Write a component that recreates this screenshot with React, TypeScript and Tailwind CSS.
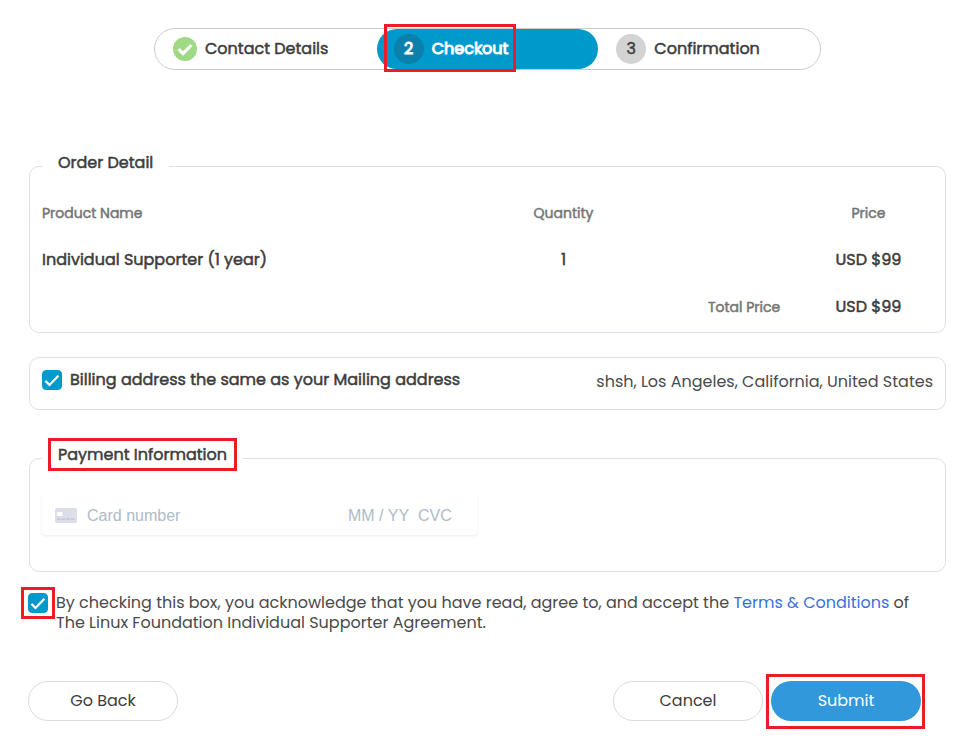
import { useState, type ReactNode } from "react";

function Mark({ className }: { className: string }) {
  return (
    <span
      aria-hidden="true"
      className={`pointer-events-none absolute border-3 border-[#ed1c24] ${className}`}
    />
  );
}

function Checkbox({
  id,
  checked,
  onChange,
}: {
  id: string;
  checked: boolean;
  onChange: (value: boolean) => void;
}) {
  return (
    <span className="relative block size-5 shrink-0">
      <input
        id={id}
        type="checkbox"
        checked={checked}
        onChange={(e) => onChange(e.target.checked)}
        className="block size-5 appearance-none rounded border border-[#0099cc] bg-white checked:bg-[#0099cc]"
      />
      {checked && (
        <svg
          viewBox="0 0 20 20"
          className="pointer-events-none absolute inset-0 size-5"
          fill="none"
          stroke="white"
          strokeWidth="2.2"
        >
          <path d="M3.4 10.9l4.1 4.1L16.4 5.8" />
        </svg>
      )}
    </span>
  );
}

function Panel({
  title,
  marked,
  children,
}: {
  title: string;
  marked?: boolean;
  children: ReactNode;
}) {
  return (
    <fieldset className="min-w-0 rounded-[10px] border border-[#dbe0e9] px-3">
      <legend className="relative px-4 pt-px pb-[7px] text-base leading-6 [-webkit-text-stroke:0.5px]">
        {title}
        {marked && <Mark className="inset-x-[6px] -top-1 bottom-[3px]" />}
      </legend>
      {children}
    </fieldset>
  );
}

function Stepper() {
  return (
    <ol className="mx-auto grid h-[42px] w-full max-w-[667px] grid-cols-3 rounded-full border border-[#cccccc] text-base [-webkit-text-stroke:0.5px]">
      <li className="flex items-center gap-2 pl-[18px]">
        <svg viewBox="0 0 24 24" className="size-6" fill="none">
          <circle cx="12" cy="12" r="12" fill="#9fd983" />
          <path d="M5.6 12.2l4.4 4.4 8.4-8.4" stroke="white" strokeWidth="3.2" />
        </svg>
        Contact Details
      </li>
      <li className="flex items-center rounded-full bg-[#0099cc] pl-[17px] text-white [-webkit-text-stroke:1px]">
        <span className="relative flex items-center gap-2">
          <span className="flex size-[30px] items-center justify-center rounded-full bg-[#0a80ab]">
            2
          </span>
          Checkout
          <Mark className="-top-[10px] -right-2 -bottom-2 -left-[10px]" />
        </span>
      </li>
      <li className="flex items-center gap-2 pl-[18px]">
        <span className="flex size-[30px] items-center justify-center rounded-full bg-[#d3d3d3]">
          3
        </span>
        Confirmation
      </li>
    </ol>
  );
}

const product = { name: "Individual Supporter (1 year)", quantity: 1, price: 99 };

function OrderTable() {
  const price = `USD $${product.price}`;
  return (
    <table className="mt-2 mb-[2px] w-full table-fixed text-center text-base [-webkit-text-stroke:0.5px]">
      <colgroup>
        <col />
        <col className="w-[241px]" />
        <col className="w-[120px]" />
        <col className="w-[129px]" />
      </colgroup>
      <thead>
        <tr className="h-[46px] text-sm text-[#757575]">
          <th scope="col" className="text-left font-normal">Product Name</th>
          <th scope="col" className="font-normal">Quantity</th>
          <td />
          <th scope="col" className="font-normal">Price</th>
        </tr>
      </thead>
      <tbody>
        <tr className="h-12">
          <td className="text-left">{product.name}</td>
          <td>{product.quantity}</td>
          <td />
          <td>{price}</td>
        </tr>
        <tr className="h-[46px]">
          <td colSpan={2} />
          <th scope="row" className="text-sm font-normal text-[#757575]">Total Price</th>
          <td>{price}</td>
        </tr>
      </tbody>
    </table>
  );
}

function CardField() {
  const input =
    "min-w-0 bg-transparent pt-[2px] text-base leading-5 text-[#32325d] outline-none placeholder:text-[#aebbc8] placeholder:opacity-100";
  return (
    <div className="mt-[21px] mb-9 flex h-10 max-w-[435px] items-center rounded bg-white pr-[17px] pl-[13px] font-['Liberation_Sans',Arial,sans-serif] shadow-[0_1px_3px_0_#e6ebf1]">
      <svg viewBox="0 0 22 15" className="mr-[10px] h-[15px] w-[22px] shrink-0">
        <rect width="22" height="15" rx="1.5" fill="#dcdfe7" />
        <rect x="2" y="4" width="5.5" height="4" rx="1" fill="white" />
        <path d="M2 11h18" stroke="#b3b8c8" strokeDasharray="3.6 1" />
      </svg>
      <input aria-label="Card number" placeholder="Card number" inputMode="numeric" className={`grow ${input}`} />
      <input aria-label="Expiry date" placeholder="MM / YY" inputMode="numeric" className={`w-[70px] ${input}`} />
      <input aria-label="CVC" placeholder="CVC" inputMode="numeric" className={`w-[42px] ${input}`} />
    </div>
  );
}

export default function App() {
  const [sameAddress, setSameAddress] = useState(true);
  const [accepted, setAccepted] = useState(true);

  return (
    <main className="bg-white pt-7 pr-6 pb-8 pl-[29px] font-[Poppins,Inter,sans-serif] text-[#3c3c3c]">
      <Stepper />

      <div className="mt-20">
        <Panel title="Order Detail">
          <OrderTable />
        </Panel>
      </div>

      <section className="mt-6 flex min-h-[53px] items-start gap-2 rounded-[10px] border border-[#dbe0e9] p-3">
        <Checkbox id="same-address" checked={sameAddress} onChange={setSameAddress} />
        <label htmlFor="same-address" className="grow text-base leading-5 [-webkit-text-stroke:0.5px]">
          Billing address the same as your Mailing address
        </label>
        <p className="text-base leading-6 text-[#4a4a4a]">
          shsh, Los Angeles, California, United States
        </p>
      </section>

      <div className="mt-8">
        <Panel title="Payment Information" marked>
          <CardField />
        </Panel>
      </div>

      <div className="mt-[21px] mr-[25px] -ml-px flex items-start gap-2">
        <span className="relative">
          <Checkbox id="accept-terms" checked={accepted} onChange={setAccepted} />
          <Mark className="-inset-x-[7px] -inset-y-[6px]" />
        </span>
        <label htmlFor="accept-terms" className="text-base leading-5 text-[#4a4a4a]">
          By checking this box, you acknowledge that you have read, agree to, and accept the{" "}
          <a href="#terms" className="text-[#3b6fdc]">Terms &amp; Conditions</a> of
          The Linux Foundation Individual Supporter Agreement.
        </label>
      </div>

      <div className="mt-12 mr-[25px] -ml-px flex gap-2 text-base">
        <button type="button" className="mr-auto h-10 w-[150px] rounded-full border border-[#dbdbdb] bg-white">
          Go Back
        </button>
        <button type="button" className="h-10 w-[150px] rounded-full border border-[#dbdbdb] bg-white">
          Cancel
        </button>
        <span className="relative">
          <button type="submit" className="block h-10 w-[150px] rounded-full bg-[#3298dc] text-white">
            Submit
          </button>
          <Mark className="-top-[7px] -right-1 -bottom-2 -left-[5px]" />
        </span>
      </div>
    </main>
  );
}
